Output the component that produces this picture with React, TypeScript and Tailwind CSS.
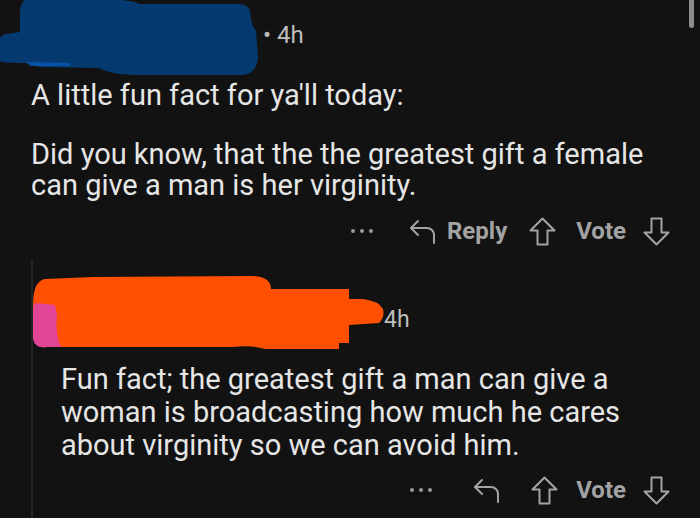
const ReplyIcon = () => (
  <svg width="28" height="26" viewBox="0 0 28 26" fill="none" stroke="currentColor" strokeWidth="2" strokeLinecap="round" strokeLinejoin="round">
    <path d="M9 3 L2 10 L9 17" />
    <path d="M2 10 H18 a7 7 0 0 1 7 7 V25" />
  </svg>
);

const UpIcon = () => (
  <svg width="27" height="29" viewBox="0 0 27 29" fill="none" stroke="currentColor" strokeWidth="2" strokeLinejoin="round">
    <path d="M13.5 1.5 L25.5 13.5 H18.5 V27.5 H8.5 V13.5 H1.5 Z" />
  </svg>
);

const DownIcon = () => (
  <svg width="27" height="29" viewBox="0 0 27 29" fill="none" stroke="currentColor" strokeWidth="2" strokeLinejoin="round">
    <path d="M13.5 27.5 L25.5 15.5 H18.5 V1.5 H8.5 V15.5 H1.5 Z" />
  </svg>
);

const Dots = () => (
  <div className="flex items-center gap-[5px]">
    <span className="w-[4px] h-[4px] rounded-full bg-[#9a9a9a]" />
    <span className="w-[4px] h-[4px] rounded-full bg-[#9a9a9a]" />
    <span className="w-[4px] h-[4px] rounded-full bg-[#9a9a9a]" />
  </div>
);

const BlueBlob = () => (
  <svg width="260" height="78" viewBox="0 0 260 78" className="shrink-0">
    <path
      d="M30 0 Q21 0 20 12 L20 33 L6 35 Q0 36 0 40 L0 62 Q2 64 26 64 L40 68 L100 69 Q110 76 140 76 L244 76 Q257 74 258 58 L256 32 Q251 26 250 12 Q248 5 238 5 L140 5 Q128 0 100 0 Z"
      fill="#043a6f"
    />
    <path d="M26 63 L70 64 L70 67 L30 67 Z" fill="#0a5cc0" opacity="0.7" />
  </svg>
);

const OrangeBlob = () => (
  <svg width="352" height="76" viewBox="0 0 352 76" className="shrink-0">
    <path
      d="M12 4 Q0 6 0 30 L0 62 Q2 74 14 72 L200 72 Q220 70 232 74 L306 74 L306 68 L316 68 L316 50 L346 48 Q352 42 350 34 Q346 26 330 24 L316 24 L316 14 L238 14 Q238 2 220 1 L60 2 Z"
      fill="#fe5000"
    />
    <path d="M2 28 Q0 30 0 40 L0 64 Q2 74 14 72 L28 72 Q22 60 24 40 L22 30 Z" fill="#e24496" />
  </svg>
);

export default function App() {
  return (
    <div
      className="relative w-[700px] h-[518px] bg-[#121212] overflow-hidden text-[#e6e6e6]"
      style={{ fontFamily: "Roboto, 'Liberation Sans', sans-serif" }}
    >
      {/* scrollbar thumb */}
      <div className="absolute right-[6px] top-0 w-[5px] h-[28px] rounded-b-full bg-[#8c8c8c]" />

      {/* parent comment */}
      <div className="flex flex-col">
        <div className="flex items-center h-[76px]">
          <BlueBlob />
          <span className="ml-[3px] -mt-[6px] text-[24px] text-[#bdbdbd]">• 4h</span>
        </div>
        <div className="pl-[31px] pr-[30px] text-[29px] leading-[31px]">
          <p className="mt-[4px]">A little fun fact for ya'll today:</p>
          <p className="mt-[28px]">Did you know, that the the greatest gift a female can give a man is her virginity.</p>
        </div>
        <div className="flex items-center justify-end h-[56px] pt-[4px] pr-[30px] text-[24px] font-bold text-[#a3a3a3]">
          <Dots />
          <span className="ml-[36px]"><ReplyIcon /></span>
          <span className="ml-[10px]">Reply</span>
          <span className="ml-[22px]"><UpIcon /></span>
          <span className="ml-[20px]">Vote</span>
          <span className="ml-[17px]"><DownIcon /></span>
        </div>
      </div>

      {/* reply thread */}
      <div className="ml-[31px] mt-[2px] border-l-2 border-[#262626]">
        <div className="flex items-center pt-[16px] h-[92px]">
          <OrangeBlob />
          <span className="-ml-[1px] mt-[14px] text-[23px] text-[#bdbdbd]">4h</span>
        </div>
        <div className="mt-[12px] pl-[28px] pr-[40px] text-[29px] leading-[33px]">
          <p>Fun fact; the greatest gift a man can give a woman is broadcasting how much he cares about virginity so we can avoid him.</p>
        </div>
        <div className="flex items-center justify-end h-[56px] pr-[30px] text-[24px] font-bold text-[#a3a3a3]">
          <Dots />
          <span className="ml-[41px]"><ReplyIcon /></span>
          <span className="ml-[30px]"><UpIcon /></span>
          <span className="ml-[18px]">Vote</span>
          <span className="ml-[17px]"><DownIcon /></span>
        </div>
      </div>
    </div>
  );
}
